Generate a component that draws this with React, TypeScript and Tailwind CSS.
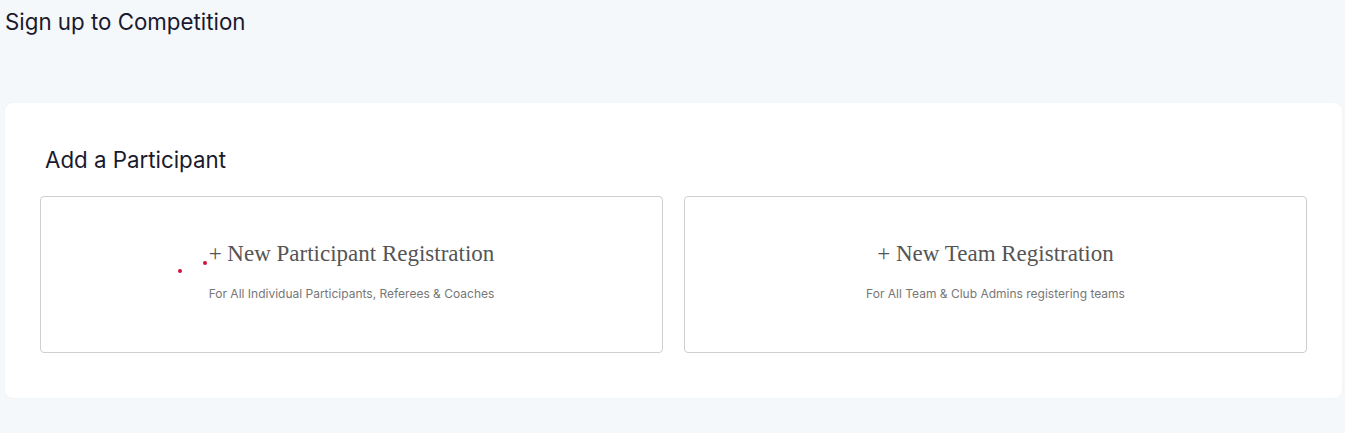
import React from 'react';

const cards = [
  {
    title: '+ New Participant Registration',
    subtitle: 'For All Individual Participants, Referees & Coaches',
    dots: true,
  },
  {
    title: '+ New Team Registration',
    subtitle: 'For All Team & Club Admins registering teams',
    dots: false,
  },
];

export default function App() {
  return (
    <div className="min-h-[433px] bg-[#f5f8fb] pl-[5px] pr-[3px] font-['Inter',sans-serif]">
      <h1 className="text-[22.3px] leading-[44px] text-[#1a1a2e]">Sign up to Competition</h1>

      <div className="mt-[59px] rounded-lg bg-white px-[35px] pt-[43px] pb-[45px] shadow-[0_0_2px_rgba(0,0,0,0.04)]">
        <h2 className="pl-[5px] text-[22.3px] leading-[28px] text-[#1a1a2e]">Add a Participant</h2>

        <div className="mt-[22px] grid grid-cols-2 gap-[21px]">
          {cards.map((card) => (
            <div
              key={card.title}
              className="relative flex h-[157px] flex-col items-center rounded border border-[#cfcfcf] bg-white pt-[42px]"
            >
              {card.dots && (
                <>
                  <span className="absolute left-[137px] top-[72px] h-[4px] w-[4px] rounded-full bg-[#d4113c]" />
                  <span className="absolute left-[162px] top-[64px] h-[4px] w-[4px] rounded-full bg-[#d4113c]" />
                </>
              )}
              <div className="font-['Liberation_Serif',serif] text-[23px] leading-[30px] text-[#555]">
                {card.title}
              </div>
              <div className="mt-[17px] text-[12px] leading-[16px] text-[#777]">{card.subtitle}</div>
            </div>
          ))}
        </div>
      </div>
    </div>
  );
}
